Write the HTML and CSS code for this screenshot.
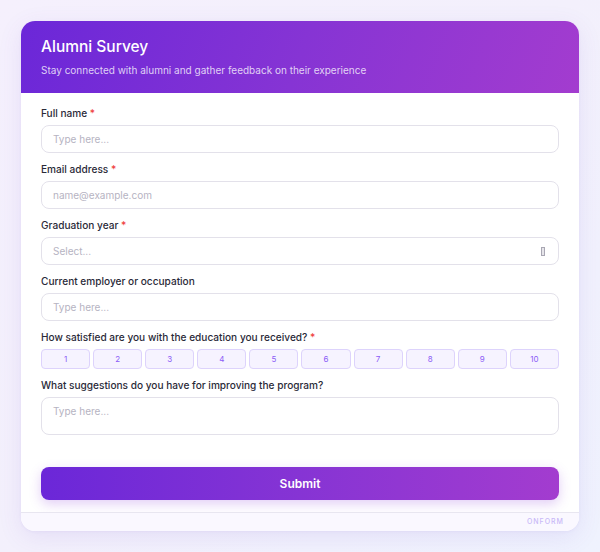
FILE: index.html
```html
<!DOCTYPE html>
<html lang="en">
<head>
<meta charset="utf-8">
<title>Alumni Survey</title>
<link rel="stylesheet" href="styles.css">
</head>
<body>
<div class="page">
  <form class="card">
    <header class="card-head">
      <h1 class="title">Alumni Survey</h1>
      <p class="subtitle">Stay connected with alumni and gather feedback on their experience</p>
    </header>
    <div class="card-body">
      <div class="field">
        <label class="label">Full name <span class="req">*</span></label>
        <div class="input"><span class="ph">Type here...</span></div>
      </div>
      <div class="field">
        <label class="label">Email address <span class="req">*</span></label>
        <div class="input"><span class="ph">name@example.com</span></div>
      </div>
      <div class="field">
        <label class="label">Graduation year <span class="req">*</span></label>
        <div class="input select"><span class="ph">Select...</span><span class="tofu"></span></div>
      </div>
      <div class="field">
        <label class="label">Current employer or occupation</label>
        <div class="input"><span class="ph">Type here...</span></div>
      </div>
      <div class="field">
        <label class="label">How satisfied are you with the education you received? <span class="req">*</span></label>
        <div class="rating">
          <span class="rate">1</span><span class="rate">2</span><span class="rate">3</span><span class="rate">4</span><span class="rate">5</span><span class="rate">6</span><span class="rate">7</span><span class="rate">8</span><span class="rate">9</span><span class="rate">10</span>
        </div>
      </div>
      <div class="field">
        <label class="label">What suggestions do you have for improving the program?</label>
        <div class="input textarea"><span class="ph">Type here...</span></div>
      </div>
      <button type="button" class="submit">Submit</button>
    </div>
    <footer class="card-foot">ONFORM</footer>
  </form>
</div>
</body>
</html>
```

FILE: styles.css
```css
* { box-sizing: border-box; }
html, body { margin: 0; padding: 0; }
body {
  width: 600px;
  height: 552px;
  overflow: hidden;
  font-family: Inter, "Liberation Sans", sans-serif;
  background: linear-gradient(135deg, #f5f0fd 0%, #f3f0fc 50%, #eff2fe 100%);
}
.page {
  padding: 21px 21px 0 21px;
}
.card {
  width: 558px;
  height: 510px;
  background: #fff;
  border-radius: 14px;
  overflow: hidden;
  display: flex;
  flex-direction: column;
  box-shadow: 0 6px 24px rgba(110, 70, 200, 0.10), 0 1px 3px rgba(110, 70, 200, 0.06);
}
.card-head {
  height: 72px;
  padding: 16px 20px 0 20px;
  background: linear-gradient(110deg, #6b27d8 0%, #8634d4 50%, #a33ccf 100%);
  color: #fff;
}
.title {
  margin: 0;
  font-size: 15.5px;
  font-weight: 500;
  line-height: 20px;
}
.subtitle {
  margin: 7px 0 0 0;
  font-size: 10px;
  line-height: 12px;
  color: rgba(255, 255, 255, 0.78);
}
.card-body {
  flex: 1;
  padding: 14px 20px 0 20px;
  display: flex;
  flex-direction: column;
}
.field {
  display: flex;
  flex-direction: column;
  margin-bottom: 10px;
}
.label {
  font-size: 10.1px;
  font-weight: 500;
  line-height: 12px;
  color: #2a2a38;
  margin-bottom: 6px;
}
.req { color: #ef4444; }
.input {
  height: 28px;
  border: 1.5px solid #e3e1ea;
  border-radius: 8px;
  padding: 0 11px;
  display: flex;
  align-items: center;
  background: #fff;
}
.ph {
  font-size: 10px;
  color: #b6b3c2;
}
.select { justify-content: space-between; }
.tofu {
  width: 4px;
  height: 9px;
  border: 1px solid #a9a7b3;
  background: #e6e5ea;
  margin-right: 2px;
}
.textarea {
  height: 38px;
  align-items: flex-start;
  padding-top: 7px;
}
.rating {
  display: flex;
  gap: 3px;
  height: 20px;
}
.rate {
  flex: 1;
  display: flex;
  align-items: center;
  justify-content: center;
  background: #f6f3ff;
  border: 1px solid #ddd3fc;
  border-radius: 4px;
  font-size: 8px;
  color: #8b5cf6;
}
.submit {
  margin-top: 22px;
  height: 33px;
  border: none;
  border-radius: 8px;
  background: linear-gradient(90deg, #6b27d8 0%, #8634d4 50%, #a33ccf 100%);
  color: #fff;
  font-family: Inter, "Liberation Sans", sans-serif;
  font-size: 12px;
  font-weight: 600;
  box-shadow: 0 4px 12px rgba(140, 60, 220, 0.25);
}
.card-foot {
  height: 19px;
  border-top: 1px solid #e8e6f0;
  background: #faf8ff;
  text-align: right;
  padding: 0 15px;
  font-size: 7px;
  font-weight: 500;
  line-height: 18px;
  letter-spacing: 1px;
  color: #c9b8f7;
}
```
